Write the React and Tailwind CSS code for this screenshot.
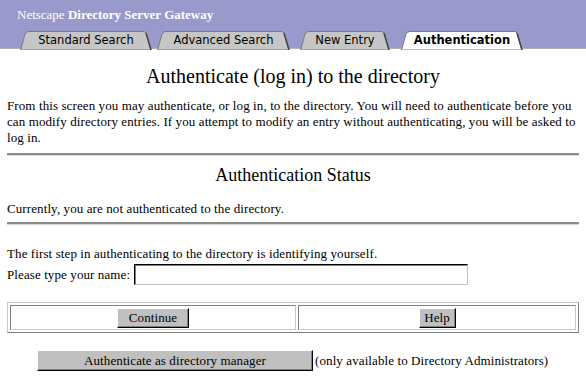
import React from "react";

function Tab({ label, active, width, className }) {
  const fill = active ? "#ffffff" : "#c6c6c6";
  return (
    <div className={`relative h-[19px] flex items-center justify-center ${className}`}>
      <svg className="absolute inset-0" width={width} height="19" viewBox={`0 0 ${width} 19`}>
        <path d={`M0.5 19 L5 3 Q6 0.5 9 0.5 L${width - 9} 0.5 Q${width - 7} 0.5 ${width - 6} 2 L${width - 1} 19 Z`} fill={fill} stroke="#7a7a7a" strokeWidth="1" />
        <path d={`M${width - 6} 2 L${width - 1} 19`} stroke="#444" strokeWidth="1.5" />
      </svg>
      <span className={active ? "relative text-[11.5px] leading-none font-['DejaVu_Sans',sans-serif] font-bold" : "relative text-[11.5px] leading-none font-['DejaVu_Sans',sans-serif] font-normal"}>
        {label}
      </span>
    </div>
  );
}

function Btn({ children, className }) {
  return (
    <button className={`bg-[#c0c0c0] border border-t-white border-l-white border-r-black border-b-black shadow-[inset_-1px_-1px_0_#808080] text-[13px] leading-none font-normal ${className}`}>
      {children}
    </button>
  );
}

const hr = "h-[3px] border-t-2 border-t-[#8c8c8c] border-b border-b-[#d8d8d8]";
const cell = "h-[25px] flex items-center justify-center border border-t-[#808080] border-l-[#808080] border-r-[#c8c8c8] border-b-[#c8c8c8]";

export default function App() {
  return (
    <div className="w-[586px] h-[379px] bg-white overflow-hidden text-black font-['Liberation_Serif',serif] tracking-[0.1px]">
      <div className="bg-[#9999cc] h-[49px] pt-[8px] border-b border-[#b0b0b0] tracking-normal">
        <div className="pl-[17px] text-white text-[13px] leading-[14px]">
          Netscape <span className="font-bold">Directory Server Gateway</span>
        </div>
        <div className="flex mt-[9px] pl-[20px]">
          <Tab label="Standard Search" width={132} className="w-[132px]" />
          <Tab label="Advanced Search" width={133} className="w-[133px] ml-[5px]" />
          <Tab label="New Entry" width={90} className="w-[90px] ml-[10px]" />
          <Tab label="Authentication" width={122} active className="w-[122px] ml-[11px]" />
        </div>
      </div>
      <div className="px-[7px]">
        <h1 className="text-center text-[20px] leading-[24px] mt-[15px] tracking-normal">Authenticate (log in) to the directory</h1>
        <p className="text-[13px] leading-[16px] mt-[10px]">
          From this screen you may authenticate, or log in, to the directory. You will need to authenticate before you can modify directory entries. If you attempt to modify an entry without authenticating, you will be asked to log in.
        </p>
        <div className={`mt-[7px] ${hr}`}></div>
        <h2 className="text-center text-[18px] leading-[22px] mt-[8px] tracking-normal">Authentication Status</h2>
        <p className="text-[13px] leading-[16px] mt-[15px]">Currently, you are not authenticated to the directory.</p>
        <div className={`mt-[5px] ${hr}`}></div>
        <p className="text-[13px] leading-[16px] mt-[21px]">The first step in authenticating to the directory is identifying yourself.</p>
        <div className="flex items-center mt-[2px] text-[13px]">
          <span>Please type your name:</span>
          <input className="ml-[4px] w-[334px] h-[21px] border border-t-black border-l-black border-r-[#c0c0c0] border-b-[#c0c0c0] shadow-[inset_1px_1px_0_#808080] outline-none bg-white" />
        </div>
        <div className="mt-[17px] flex gap-[2px] p-[2px] border border-t-[#c8c8c8] border-l-[#c8c8c8] border-r-[#808080] border-b-[#808080]">
          <div className={`w-[286px] ${cell}`}>
            <Btn className="w-[72px] h-[20px]">Continue</Btn>
          </div>
          <div className={`flex-1 ${cell}`}>
            <Btn className="w-[37px] h-[20px]">Help</Btn>
          </div>
        </div>
        <div className="mt-[17px] flex items-center pl-[30px] text-[13px]">
          <Btn className="w-[276px] h-[21px]">Authenticate as directory manager</Btn>
          <span className="ml-[2px]">(only available to Directory Administrators)</span>
        </div>
      </div>
    </div>
  );
}
